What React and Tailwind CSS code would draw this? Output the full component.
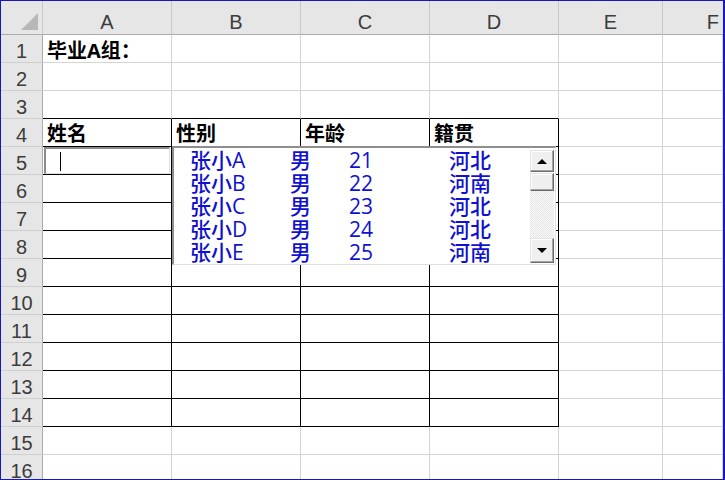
import React from 'react';

const FONT = "font-['Liberation_Sans','Noto_Sans_CJK_SC',sans-serif]";
const FONT2 = "font-['Open_Sans','Noto_Sans_CJK_SC',sans-serif]";

const COLS = ['A', 'B', 'C', 'D', 'E', 'F'];
const ROWS = Array.from({ length: 16 }, (_, i) => i + 1);

const items = [
  ['张小A', '男', '21', '河北'],
  ['张小B', '男', '22', '河南'],
  ['张小C', '男', '23', '河北'],
  ['张小D', '男', '24', '河北'],
  ['张小E', '男', '25', '河南'],
];

const headers = ['姓名', '性别', '年龄', '籍贯'];

function cellBorder(r, c) {
  const inTable = r >= 4 && r <= 14 && c <= 3;
  const topOfTable = r === 3 && c <= 3;
  const right = inTable ? 'border-r-black' : 'border-r-[#d4d4d4]';
  const bottom = inTable || topOfTable ? 'border-b-black' : 'border-b-[#d4d4d4]';
  return `border-r border-b ${right} ${bottom}`;
}

function Arrow({ down }) {
  return (
    <svg width="10" height="5" viewBox="0 0 10 5">
      {down ? <path d="M0 0 L10 0 L5 5 Z" fill="#000" /> : <path d="M0 5 L5 0 L10 5 Z" fill="#000" />}
    </svg>
  );
}

function ScrollBtn({ className, children }) {
  return (
    <div
      className={`${className} flex items-center justify-center bg-[#efefef] border border-t-[#e2e2e2] border-l-[#e2e2e2] border-r-[#6a6a6a] border-b-[#6a6a6a] shadow-[inset_-1px_-1px_0_#a3a3a3,inset_1px_1px_0_#ffffff]`}
    >
      {children}
    </div>
  );
}

function CellContent({ r, c }) {
  if (r === 1 && c === 0) {
    return (
      <div className="h-full flex items-end pl-1 pb-px">
        <span className={`${FONT2} text-[20px] leading-[20px] font-bold text-black whitespace-nowrap`}>毕业A组：</span>
      </div>
    );
  }
  if (r === 4 && c <= 3) {
    return (
      <div className="h-full flex items-end pl-1 pb-[2px]">
        <span className="text-[20px] leading-[20px] font-bold text-black whitespace-nowrap">{headers[c]}</span>
      </div>
    );
  }
  if (r === 5 && c === 0) {
    return (
      <div className="h-full pl-px">
        <div className="h-full w-[126px] border-t-2 border-l-2 border-[#8c8c8c] border-r border-b border-r-[#dedede] border-b-[#dedede] bg-white">
          <div className="ml-[14px] mt-[3px] w-px h-[19px] bg-black" />
        </div>
      </div>
    );
  }
  return null;
}

export default function App() {
  return (
    <div className={`${FONT} w-[725px] h-[480px] overflow-hidden bg-white border-l border-t border-b border-r-2 border-[#1717c4]`}>
      <div className="relative w-full h-full overflow-hidden">
        <div className="grid grid-cols-[42px_129px_129px_129px_129px_104px_1fr] grid-rows-[34px] auto-rows-[28px]">
          {/* corner */}
          <div className="bg-[#e6e6e6] border-r border-b border-r-[#c8c8c8] border-b-[#ababab]">
            <svg width="41" height="33" viewBox="0 0 41 33">
              <polygon points="37,12 37,29 20,29" fill="#b8b8b8" />
            </svg>
          </div>
          {COLS.map((col, i) => (
            <div
              key={col}
              className={`bg-[#e6e6e6] border-b border-b-[#ababab] ${i < 5 ? 'border-r border-r-[#c8c8c8]' : ''} flex items-end pb-[2px] ${i < 5 ? 'justify-center' : 'justify-end pr-[4px]'}`}
            >
              <span className="text-[20px] leading-[20px] text-[#3c3c3c]">{col}</span>
            </div>
          ))}
          {ROWS.map((r) => (
            <React.Fragment key={r}>
              <div className="bg-[#e6e6e6] border-r border-b border-r-[#ababab] border-b-[#cfcfcf] flex items-end justify-center pb-px">
                <span className="text-[20px] leading-[20px] text-[#3c3c3c]">{r}</span>
              </div>
              {COLS.map((col, c) => (
                <div key={col} className={`${cellBorder(r, c)} bg-white`}>
                  <CellContent r={r} c={c} />
                </div>
              ))}
            </React.Fragment>
          ))}
        </div>

        {/* list box */}
        <div className="absolute left-[171px] top-[145px] w-[384px] h-[119px] flex bg-white border-t-2 border-l-2 border-[#8e8e8e] border-r border-b border-r-[#e0e0e0] border-b-[#e0e0e0]">
          <div className={`${FONT2} flex-1 pt-px`}>
            {items.map((it, i) => (
              <div
                key={i}
                className="grid grid-cols-[100px_59px_100px_1fr] pl-[16px] h-[23px] text-[21px] leading-[23px] font-medium text-[#1010d0] whitespace-nowrap"
              >
                <span>{it[0]}</span>
                <span>{it[1]}</span>
                <span>{it[2]}</span>
                <span>{it[3]}</span>
              </div>
            ))}
          </div>
          <div className="w-[24px] mt-[2px] mb-px mr-px flex flex-col">
            <ScrollBtn className="h-[22px]">
              <Arrow />
            </ScrollBtn>
            <ScrollBtn className="h-[18px] mt-px" />
            <div className="flex-1 bg-[repeating-conic-gradient(#e4e4e4_0_25%,#fafafa_0_50%)] bg-[length:2px_2px]" />
            <ScrollBtn className="h-[25px]">
              <Arrow down />
            </ScrollBtn>
          </div>
        </div>
      </div>
    </div>
  );
}
